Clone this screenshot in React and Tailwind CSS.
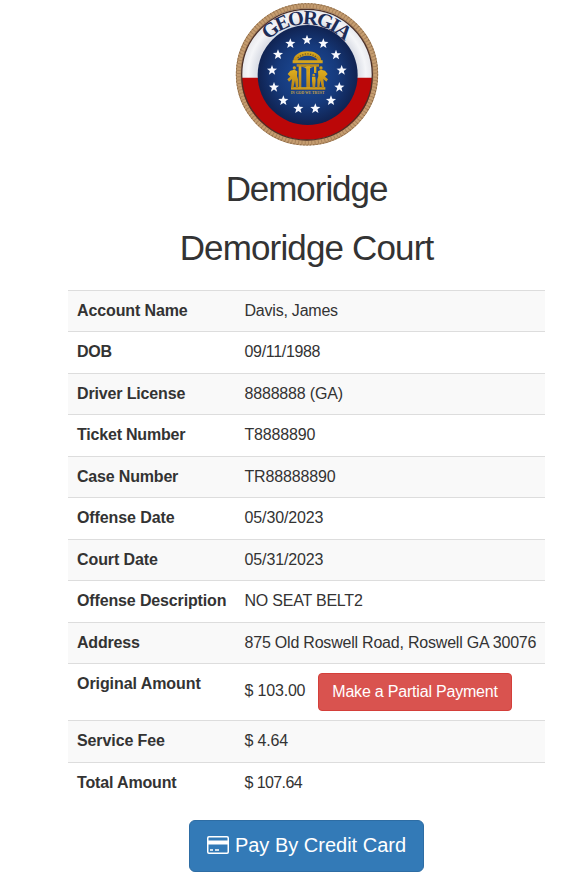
import React from "react";

const rows = [
  { label: "Account Name", value: "Davis, James", h: "h-[41px]", ls: "tracking-[-0.12px]", vs: "tracking-[-0.22px]" },
  { label: "DOB", value: "09/11/1988", h: "h-[42px]", ls: "tracking-[-0.2px]", vs: "tracking-[-0.32px]" },
  { label: "Driver License", value: "8888888 (GA)", h: "h-[41px]", ls: "tracking-[-0.15px]", vs: "tracking-[-0.18px]" },
  { label: "Ticket Number", value: "T8888890", h: "h-[42px]", ls: "tracking-[-0.2px]", vs: "tracking-[-0.15px]" },
  { label: "Case Number", value: "TR88888890", h: "h-[41px]", ls: "tracking-[-0.18px]", vs: "tracking-[-0.15px]" },
  { label: "Offense Date", value: "05/30/2023", h: "h-[42px]", ls: "tracking-[-0.1px]", vs: "tracking-[-0.12px]" },
  { label: "Court Date", value: "05/31/2023", h: "h-[41px]", ls: "tracking-[-0.1px]", vs: "tracking-[-0.12px]" },
  { label: "Offense Description", value: "NO SEAT BELT2", h: "h-[42px]", ls: "tracking-[-0.14px]", vs: "tracking-[-0.22px]" },
  { label: "Address", value: "875 Old Roswell Road, Roswell GA 30076", h: "h-[41px]", ls: "tracking-[-0.2px]", vs: "tracking-[-0.21px]" },
  { label: "Original Amount", value: "$ 103.00", h: "h-[57px]", ls: "tracking-[-0.07px]", vs: "tracking-[-0.18px]", partial: true },
  { label: "Service Fee", value: "$ 4.64", h: "h-[42px]", ls: "tracking-[-0.1px]", vs: "tracking-[-0.18px]" },
  { label: "Total Amount", value: "$ 107.64", h: "h-[41px]", ls: "tracking-[-0.15px]", vs: "tracking-[-0.6px]" },
];

const stars = [
  [231, 119], [280, 130], [318, 164], [335, 210], [328, 261], [303, 301], [256, 325],
  [205, 325], [160, 301], [132, 261], [126, 210], [144, 163], [181, 130],
];

const starPoints = (cx, cy, r) =>
  Array.from({ length: 10 }, (_, i) => {
    const a = (Math.PI * i) / 5 - Math.PI / 2;
    const q = i % 2 ? r * 0.42 : r;
    return `${cx + q * Math.cos(a)},${cy + q * Math.sin(a)}`;
  }).join(" ");

const Soldier = ({ transform }) => (
  <g transform={transform}>
    <circle cx="193" cy="204" r="5" />
    <path d="M181 212l12-3 9 5-1 14 3 10v26h-6l-3-23-5 23h-7l3-27-9 8-5-7 9-8-8-8z" />
  </g>
);

function Seal() {
  return (
    <svg className="block h-[150px] w-[154px]" viewBox="0 0 462 450">
      <defs>
        <radialGradient id="field">
          <stop offset="0" stopColor="#1d4d9c" />
          <stop offset="0.6" stopColor="#163a7c" />
          <stop offset="1" stopColor="#102352" />
        </radialGradient>
        <radialGradient id="white">
          <stop offset="0.78" stopColor="#dcdfe7" />
          <stop offset="0.9" stopColor="#f4f5f8" />
          <stop offset="1" stopColor="#e7e8ed" />
        </radialGradient>
        <linearGradient id="gold" x1="0" y1="0" x2="0" y2="1">
          <stop offset="0" stopColor="#dfae1d" />
          <stop offset="1" stopColor="#b98518" />
        </linearGradient>
        <path id="arc" d="M73 228a155 155 0 0 1 310 0" />
      </defs>
      <circle cx="231" cy="223" r="205" fill="none" stroke="#a9825a" strokeWidth="17" />
      <circle cx="231" cy="223" r="206" fill="none" stroke="#c59d70" strokeWidth="13" strokeDasharray="7 3" />
      <circle cx="231" cy="223" r="212" fill="none" stroke="#80613f" strokeWidth="3" strokeDasharray="4 6" />
      <circle cx="231" cy="224" r="196" fill="url(#white)" />
      <path d="M35 233a196 187 0 0 0 392 0z" fill="#bb0708" />
      <circle cx="231" cy="224" r="196" fill="none" stroke="#4c3027" strokeWidth="4" />
      <circle cx="233" cy="225" r="150" fill="url(#field)" />
      <text fontFamily="Liberation Serif, serif" fontSize="61" fontWeight="700" fill="#1c2c57">
        <textPath href="#arc" startOffset="117" textLength="257" lengthAdjust="spacing">GEORGIA</textPath>
      </text>
      {stars.map(([x, y]) => (
        <polygon key={`${x}-${y}`} points={starPoints(x, y + 1, 16)} fill="#f7f9ff" />
      ))}
      <g fill="url(#gold)">
        <path d="M190 182c2-38 82-38 84 0h-11c-8-20-53-20-61 0z" />
        <path d="M188 181h90v9h-90zM200 193h67v7h-67z" />
        <path d="M229 199h11v64h-11zM206 199h8v64h-8zM252 199h7v20h-7z" />
        <path d="M215 200q19 3 19 18 1-15 18-18z" />
        <path d="M183 262h103v7H183z" />
        <circle cx="251" cy="225" r="4" />
        <path d="M246 230h10l1 12-2 21h-7l-2-20z" />
        <Soldier />
        <Soldier transform="translate(466 0) scale(-1 1)" />
      </g>
      <path d="M203 174q29-25 59 0" fill="none" stroke="#725c25" strokeWidth="4" strokeDasharray="4 4" />
      <text x="182" y="281" fontFamily="Liberation Serif, serif" fontSize="11" fontWeight="700" fill="#c6a343" textLength="101">IN GOD WE TRUST</text>
    </svg>
  );
}

function CardIcon() {
  return (
    <svg className="mr-[6px] h-[18px] w-[22px] shrink-0" viewBox="0 0 22 18" fill="none">
      <rect x="0.75" y="0.75" width="20.5" height="16.5" rx="1.2" stroke="white" strokeWidth="1.5" />
      <path d="M1 4.5h20v4H1z" fill="white" />
      <path d="M3 14h3M8 14h4" stroke="white" strokeWidth="1.5" />
    </svg>
  );
}

export default function App() {
  return (
    <main className="h-[885px] w-[584px] overflow-hidden bg-white font-['Liberation_Sans',Arial,sans-serif] text-base text-[#333]">
      <div className="ml-[68px] flex w-[477px] flex-col items-center">
        <Seal />
        <h1 className="mt-[19px] whitespace-nowrap text-[35px] leading-10 tracking-[-1.05px]">Demoridge</h1>
        <h1 className="mt-[19px] whitespace-nowrap text-[35px] leading-10 tracking-[-0.85px]">Demoridge Court</h1>
        <dl className="mt-[22px] w-full">
          {rows.map((r, i) => (
            <div key={r.label} className={`flex whitespace-nowrap border-t border-[#ddd] px-[9px] pt-[9px] leading-[22px] ${r.h} ${i % 2 ? "bg-white" : "bg-[#f9f9f9]"}`}>
              <dt className={`w-[167.5px] shrink-0 font-bold ${r.ls}`}>{r.label}</dt>
              <dd className="flex items-start">
                <span className={`${r.vs} ${r.partial ? "mt-[7px] w-[61px]" : ""}`}>{r.value}</span>
                {r.partial && (
                  <button className="ml-[12.5px] h-[38px] w-[194px] shrink-0 rounded border border-[#d43f3a] bg-[#d9534f] tracking-[-0.2px] text-white">
                    Make a Partial Payment
                  </button>
                )}
              </dd>
            </div>
          ))}
        </dl>
        <button className="mt-[17px] flex h-[52px] w-[235px] items-center justify-center whitespace-nowrap rounded-md border border-[#2e6da4] bg-[#337ab7] pb-0.5 text-xl text-white">
          <CardIcon />
          <span>Pay By Credit Card</span>
        </button>
      </div>
    </main>
  );
}
